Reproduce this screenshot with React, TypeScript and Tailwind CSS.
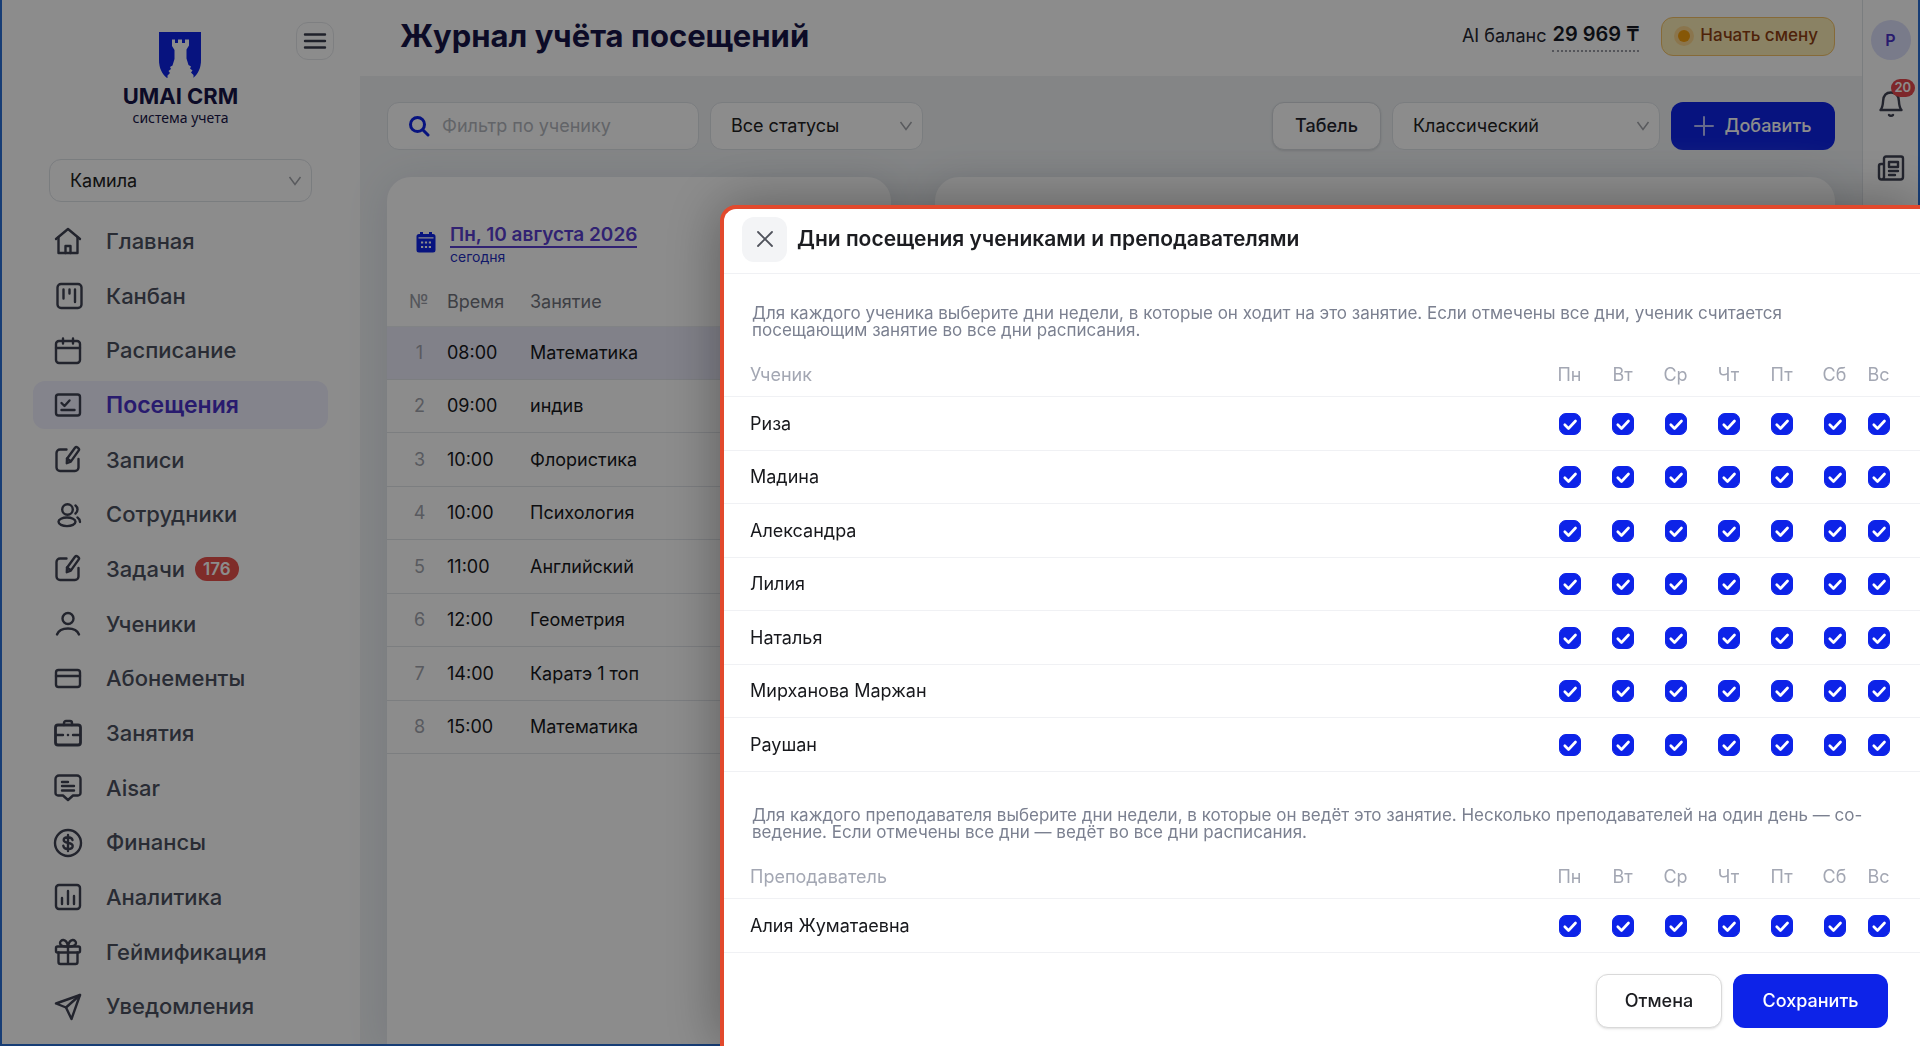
import type { ReactNode } from "react"

const days = ["Пн", "Вт", "Ср", "Чт", "Пт", "Сб", "Вс"]

const students = ["Риза", "Мадина", "Александра", "Лилия", "Наталья", "Мирханова Маржан", "Раушан"]

const teachers = ["Алия Жуматаевна"]

const lessons = [
  { time: "08:00", name: "Математика" },
  { time: "09:00", name: "индив" },
  { time: "10:00", name: "Флористика" },
  { time: "10:00", name: "Психология" },
  { time: "11:00", name: "Английский" },
  { time: "12:00", name: "Геометрия" },
  { time: "14:00", name: "Каратэ 1 топ" },
  { time: "15:00", name: "Математика" },
]

function Icon({ children, className = "size-8" }: { children: ReactNode; className?: string }) {
  return (
    <svg
      viewBox="0 0 32 32"
      fill="none"
      stroke="currentColor"
      strokeWidth="2.4"
      strokeLinecap="round"
      strokeLinejoin="round"
      className={className}
      aria-hidden="true"
    >
      {children}
    </svg>
  )
}

const editIcon = (
  <>
    <path d="M14.5 5.5H8A3.5 3.5 0 0 0 4.5 9v14.5A3.5 3.5 0 0 0 8 27h15a3.5 3.5 0 0 0 3.5-3.5V15" />
    <path d="M23 3.8a1.8 1.8 0 0 1 2.5-.3l.8.6a1.8 1.8 0 0 1 .3 2.5l-7.8 11-4 1.6.2-4.4z" />
    <path d="m15 14.5 3.5 2.5" />
  </>
)

const menu: { label: string; icon: ReactNode; badge?: string; active?: boolean }[] = [
  {
    label: "Главная",
    icon: (
      <>
        <path d="M4 14 16 4l12 10" />
        <path d="M6.5 12.5V28h19V12.5" />
        <path d="M13.5 28v-7h5v7" />
      </>
    ),
  },
  {
    label: "Канбан",
    icon: (
      <>
        <rect x="5.5" y="4" width="24" height="24" rx="3.5" />
        <path d="M11.5 9.5v9M17.5 9.5v4M23 9.5v12.5" />
      </>
    ),
  },
  {
    label: "Расписание",
    icon: (
      <>
        <rect x="4" y="6" width="24" height="22" rx="3" />
        <path d="M4 13h24M11 3.5v5M21 3.5v5" />
      </>
    ),
  },
  {
    label: "Посещения",
    active: true,
    icon: (
      <>
        <rect x="4" y="5.5" width="24" height="21" rx="2.5" />
        <path d="m9.5 14 3 3 5-5.5M9.5 21h13" />
      </>
    ),
  },
  { label: "Записи", icon: editIcon },
  {
    label: "Сотрудники",
    icon: (
      <>
        <circle cx="15.5" cy="10.5" r="5.3" />
        <ellipse cx="15" cy="22.8" rx="8.5" ry="4.3" />
        <path d="M23.5 6.5a5 5 0 0 1 0 8M25.5 18.5c1.600 1 2.400 2.600 2.500 4.500" />
      </>
    ),
  },
  { label: "Задачи", icon: editIcon, badge: "176" },
  {
    label: "Ученики",
    icon: (
      <>
        <circle cx="16" cy="10.5" r="5.5" />
        <path d="M5 26.5c3-8 19-8 22 0" />
      </>
    ),
  },
  {
    label: "Абонементы",
    icon: (
      <>
        <rect x="4" y="7" width="24" height="17" rx="2.5" />
        <path d="M4 13h24" />
      </>
    ),
  },
  {
    label: "Занятия",
    icon: (
      <>
        <rect x="3.5" y="8" width="25" height="20" rx="2.5" strokeWidth="2.8" />
        <path d="M12 8V6a2 2 0 0 1 2-2h4a2 2 0 0 1 2 2v2M4 18h7M21 18h7M15.9 18h.2" />
      </>
    ),
  },
  {
    label: "Aisar",
    icon: (
      <>
        <path d="M7 3.5h18a3.5 3.5 0 0 1 3.5 3.5v14a2.5 2.5 0 0 1-2.5 2.5h-5L16 28l-5-4.5H6A2.5 2.5 0 0 1 3.5 21V7A3.5 3.5 0 0 1 7 3.5z" />
        <path d="M10 10h6M10 14h12M10 18.5h12" />
      </>
    ),
  },
  {
    label: "Финансы",
    icon: (
      <>
        <circle cx="16" cy="16" r="13" />
        <path d="M20.5 13c-.5-2-2.3-2.8-4.5-2.8-2.5 0-4.3 1-4.3 2.9 0 4.3 9 1.5 9 5.9 0 2-2 3-4.7 3-2.5 0-4.3-1-4.7-3.2M16 8v16" />
      </>
    ),
  },
  {
    label: "Аналитика",
    icon: (
      <>
        <rect x="4" y="4" width="24" height="24" rx="3" />
        <path d="M10 17v6M16 10v13M22 15v8" />
      </>
    ),
  },
  {
    label: "Геймификация",
    icon: (
      <>
        <rect x="4" y="10.5" width="24" height="6" rx="1.5" />
        <path d="M6.5 16.5V26a2 2 0 0 0 2 2h15a2 2 0 0 0 2-2v-9.5M16 10.5V28" />
        <path d="M16 10.5c-3 0-8 0-8-3.5s6.5-5.5 8 3.5c1.5-9 8-7 8-3.5s-5 3.5-8 3.5z" />
      </>
    ),
  },
  {
    label: "Уведомления",
    icon: (
      <>
        <path d="M28 4 4 12.5l10 4L19.5 28z" />
        <path d="M28 4 14 16.5" />
      </>
    ),
  },
]

function Logo() {
  return (
    <div className="flex flex-col items-center">
      <svg viewBox="0 0 42 46" className="h-[46px] w-[42px]" aria-hidden="true">
        <path d="M0 0h42v28c0 8-3 14-8 18H8C3 42 0 36 0 28z" fill="#0d23e8" />
        <path
          d="M13 7.5h3V11h3V7.5h4V11h3V7.5h4v6l-2.5 4v9l2 6.5 2.5 1.5-1 2 2.5 2-1.500 2 2.500 2.500V46H8.500v-2.500l2.500-2.500-1.500-2 2.500-2-1-2 2.500-1.500 2-6.500v-9l-2.500-4z"
          fill="#fff"
        />
      </svg>
      <span className="mt-1 text-[22px] leading-7 font-bold text-[#171547]">UMAI CRM</span>
      <span className="text-sm leading-4 text-[#171547] font-['Noto_Sans',sans-serif]">система учета</span>
    </div>
  )
}

function Chevron() {
  return (
    <svg
      viewBox="0 0 14 10"
      fill="none"
      stroke="#a3a5ab"
      strokeWidth="1.5"
      className="pointer-events-none absolute right-2.5 top-1/2 h-2.5 w-3.5 -translate-y-1/2"
      aria-hidden="true"
    >
      <path d="m1.5 1 5.5 7.5L12.5 1" />
    </svg>
  )
}

function Select({ label, value, className }: { label: string; value: string; className: string }) {
  return (
    <div className={`relative ${className}`}>
      <select
        aria-label={label}
        className="h-full w-full appearance-none rounded-xl border border-[#dfe3e8] bg-white px-5 text-lg text-[#212121]"
      >
        <option>{value}</option>
      </select>
      <Chevron />
    </div>
  )
}

function Sidebar() {
  return (
    <aside className="flex w-[358px] shrink-0 flex-col bg-white pt-[22px] pb-2.5 pr-[26px] pl-[31px]">
      <div className="relative flex h-[134px] justify-center pr-1.5 pt-2.5">
        <Logo />
        <button
          type="button"
          aria-label="Свернуть меню"
          className="absolute right-0 top-0 flex size-[38px] items-center justify-center rounded-xl border border-[#e6e8ec] text-[#3a3d4d]"
        >
          <svg viewBox="0 0 24 18" stroke="currentColor" strokeWidth="2.4" strokeLinecap="round" className="h-[18px] w-6">
            <path d="M2 2.5h20M2 9h20M2 15.5h20" />
          </svg>
        </button>
      </div>
      <Select label="Филиал" value="Камила" className="mt-[3px] ml-4 mr-[22px] h-[43px]" />
      <nav className="mt-3 mr-1.5 flex flex-1 flex-col">
        {menu.map((item) => (
          <div key={item.label} className="flex flex-1 items-center">
            <a
              href="#"
              className={
                item.active
                  ? "flex h-12 flex-1 items-center gap-[22px] rounded-xl bg-[#f0f0ff] pl-[19px] text-[23px] font-semibold text-[#4a32c9]"
                  : "flex h-12 flex-1 items-center gap-[22px] rounded-xl pl-[19px] text-[22px] font-medium text-[#4b5060]"
              }
            >
              <Icon className="size-8 text-[#3f4253]">{item.icon}</Icon>
              {item.label}
              {item.badge && (
                <span className="-ml-3 flex h-6 items-center rounded-full bg-[#e8504c] px-2 text-[17px] font-semibold text-white">
                  {item.badge}
                </span>
              )}
            </a>
          </div>
        ))}
      </nav>
    </aside>
  )
}

function Header() {
  return (
    <header className="flex h-19 items-center bg-white pr-[27px] pb-1 pl-10">
      <h1 className="flex-1 text-[31px] font-bold text-[#171547]">Журнал учёта посещений</h1>
      <span className="mr-1.5 text-lg text-[#23252f]">AI баланс</span>
      <span className="mr-[22px] border-b-2 border-dotted border-[#9a9ca5] pb-0.5 text-xl leading-7 font-semibold text-[#171a26]">
        29 969 ₸
      </span>
      <button
        type="button"
        className="flex h-[39px] items-center gap-1.5 rounded-xl border border-[#f4c267] bg-[#fbedb6] px-3 text-[17px] font-medium text-[#8f3f12]"
      >
        <span className="flex size-5 items-center justify-center rounded-full bg-[#fbd68c]">
          <span className="size-3 rounded-full bg-[#f59e0b]" />
        </span>
        <span className="pr-1">Начать смену</span>
      </button>
    </header>
  )
}

function Toolbar() {
  return (
    <div className="flex gap-[11px] pt-[26px] pr-[27px] pl-[27px]">
      <label className="flex h-12 w-[312px] items-center gap-3 rounded-xl border border-[#dfe3e8] bg-white px-5">
        <svg viewBox="0 0 22 22" fill="none" stroke="#0d23e8" strokeWidth="3" strokeLinecap="round" className="size-[22px] shrink-0">
          <circle cx="9.5" cy="9.5" r="7" />
          <path d="m15 15 5 5" />
        </svg>
        <input
          type="text"
          aria-label="Фильтр по ученику"
          placeholder="Фильтр по ученику"
          className="w-full min-w-0 text-lg outline-none placeholder:text-[#b3b6bd]"
        />
      </label>
      <Select label="Статус" value="Все статусы" className="h-12 w-[213px]" />
      <div className="flex-1" />
      <button
        type="button"
        className="h-12 w-[109px] rounded-xl border border-[#d5d9de] bg-white text-lg font-medium text-[#23252f] shadow-sm"
      >
        Табель
      </button>
      <Select label="Вид" value="Классический" className="h-12 w-[268px]" />
      <button
        type="button"
        className="flex h-12 w-[164px] items-center justify-center gap-2.5 rounded-xl bg-[#0d23e8] text-lg font-medium text-white"
      >
        <svg viewBox="0 0 20 20" stroke="#b9c0ff" strokeWidth="2" strokeLinecap="round" className="size-5">
          <path d="M10 1v18M1 10h18" />
        </svg>
        Добавить
      </button>
    </div>
  )
}

function LessonsCard() {
  return (
    <section className="w-[504px] overflow-hidden rounded-t-3xl bg-white shadow-[0_4px_40px_#d9dde4]">
      <div className="flex items-center gap-3.5 pt-[47px] pl-[29px]">
        <svg viewBox="0 0 20 22" className="mb-1.5 h-[22px] w-5" aria-hidden="true">
          <path
            d="M3 3h1V1h3v2h6V1h3v2h1a2.5 2.5 0 0 1 2.5 2.5V19a2.5 2.5 0 0 1-2.5 2.5H3A2.5 2.5 0 0 1 .5 19V5.5A2.5 2.5 0 0 1 3 3z"
            fill="#0d23e8"
          />
          <path d="M2.5 6.8h15" stroke="#fff" strokeWidth="1.2" />
          <path d="M5 11.5h10M5 16h10" stroke="#fff" strokeWidth="2.2" strokeDasharray="2.2 1.7" />
        </svg>
        <div className="flex flex-col items-start">
          <a href="#" className="border-b-2 border-[#5a3fd0] text-[19px] leading-[22px] font-semibold text-[#5a3fd0]">
            Пн, 10 августа 2026
          </a>
          <span className="text-sm leading-[17px] text-[#1f2fc0]">сегодня</span>
        </div>
      </div>
      <table className="mt-3 w-full border-separate border-spacing-0 text-left text-lg text-[#17181c]">
        <thead>
          <tr className="h-[50px] text-[#71747d]">
            <th className="w-15 border-b border-[#eceef2] pl-[22px] font-normal text-[#9a9da7]">№</th>
            <th className="w-[83px] border-b border-[#eceef2] font-normal">Время</th>
            <th className="border-b border-[#eceef2] font-normal">Занятие</th>
          </tr>
        </thead>
        <tbody>
          {lessons.map((lesson, i) => (
            <tr key={i} className={i === 0 ? "h-[53px] bg-[#ebebfa]" : "odd:h-[54px] even:h-[53px]"}>
              <td className="border-b border-[#e2e5ea] pl-[5px] text-center text-[#a2a5ae]">{i + 1}</td>
              <td className="border-b border-[#e2e5ea]">{lesson.time}</td>
              <td className="border-b border-[#e2e5ea]">{lesson.name}</td>
            </tr>
          ))}
        </tbody>
      </table>
    </section>
  )
}

function RightRail() {
  return (
    <aside className="flex w-14 shrink-0 flex-col items-center border-l border-[#dfe3e8] bg-white pt-5 text-[#3f4253]">
      <span className="flex size-10 items-center justify-center rounded-full bg-[#dde0fb] text-base font-semibold text-[#4a32c9]">
        Р
      </span>
      <button type="button" aria-label="Уведомления" className="relative mt-[27px]">
        <Icon className="size-8">
          <path d="M5.5 23h21c-1.8-2-2.3-4-2.6-9-.3-5.5-3.2-8.5-7.9-8.5S8.4 8.5 8.1 14c-.3 5-.8 7-2.6 9zM14 28c.8 1 3.2 1 4 0" />
        </Icon>
        <span className="absolute -top-2 left-4 flex h-[18px] items-center rounded-full bg-[#e5484d] px-1 text-[13px] font-semibold text-white">
          20
        </span>
      </button>
      <button type="button" aria-label="Новости" className="mt-[33px]">
        <Icon className="size-8">
          <path d="M9 25V6.5a2 2 0 0 1 2-2h15a2 2 0 0 1 2 2V25a2.5 2.5 0 0 1-2.5 2.5h-19A2.5 2.5 0 0 1 4 25V14a2 2 0 0 1 2-2h3M9 25a2.5 2.5 0 0 1-2.5 2.5" />
          <path d="M14 10h9v5h-9zM14 19h9M14 23h6" />
        </Icon>
      </button>
    </aside>
  )
}

function Checkbox({ label }: { label: string }) {
  return (
    <span className="relative mx-auto flex size-[22px]">
      <input
        type="checkbox"
        defaultChecked
        aria-label={label}
        className="peer size-[22px] appearance-none rounded-[7px] border border-[#c5c9d3] checked:border-[#0d23e8] checked:bg-[#0d23e8]"
      />
      <svg
        viewBox="0 0 22 22"
        fill="none"
        stroke="#fff"
        strokeWidth="2.7"
        strokeLinecap="round"
        strokeLinejoin="round"
        className="pointer-events-none absolute inset-0 hidden peer-checked:block"
        aria-hidden="true"
      >
        <path d="m5.8 11.8 3.7 3.7L16.5 8" />
      </svg>
    </span>
  )
}

function DaysTable({ title, people }: { title: string; people: string[] }) {
  return (
    <table className="w-full border-separate border-spacing-0 text-lg text-[#17181c]">
      <thead>
        <tr className="h-11 text-[#a3a7b3]">
          <th className="border-b border-[#f0f1f4] pl-[26px] text-left font-normal">{title}</th>
          {days.map((day) => (
            <th key={day} className="w-[53px] border-b border-[#f0f1f4] font-normal last:w-[59px] last:pr-6">
              {day}
            </th>
          ))}
        </tr>
      </thead>
      <tbody>
        {people.map((person) => (
          <tr key={person} className="odd:h-[54px] even:h-[53px]">
            <th scope="row" className="border-b border-[#f0f1f4] pl-[26px] text-left font-normal">
              {person}
            </th>
            {days.map((day) => (
              <td key={day} className="border-b border-[#f0f1f4] last:pr-6">
                <Checkbox label={`${person}, ${day}`} />
              </td>
            ))}
          </tr>
        ))}
      </tbody>
    </table>
  )
}

function VisitDaysDialog() {
  return (
    <div
      role="dialog"
      aria-labelledby="visit-days-title"
      className="flex w-5/8 flex-col overflow-hidden rounded-tl-2xl border-t-4 border-l-4 border-[#e2492d] bg-white shadow-[0_0_56px_rgba(0,0,0,0.35)]"
    >
      <div className="flex h-[65px] items-center gap-2.5 border-b border-[#f0f1f4] pb-1 pl-[18px]">
        <button
          type="button"
          aria-label="Закрыть"
          className="flex size-[45px] items-center justify-center rounded-xl bg-[#f3f4f6]"
        >
          <svg viewBox="0 0 16 16" stroke="#50535c" strokeWidth="1.8" strokeLinecap="round" className="size-4">
            <path d="m1 1 14 14M15 1 1 15" />
          </svg>
        </button>
        <h2 id="visit-days-title" className="text-[21px] font-semibold text-[#1c1d21]">
          Дни посещения учениками и преподавателями
        </h2>
      </div>
      <div className="flex-1">
        <p className="pt-[31px] pr-12 pb-3.5 pl-7 text-[17px] leading-[17px] text-[#7b8090]">
          Для каждого ученика выберите дни недели, в которые он ходит на это занятие. Если отмечены все дни, ученик считается
          посещающим занятие во все дни расписания.
        </p>
        <DaysTable title="Ученик" people={students} />
        <p className="pt-[35px] pr-12 pb-3.5 pl-7 text-[17px] leading-[17px] text-[#7b8090]">
          Для каждого преподавателя выберите дни недели, в которые он ведёт это занятие. Несколько преподавателей на один день — со-
          <br />
          ведение. Если отмечены все дни — ведёт во все дни расписания.
        </p>
        <DaysTable title="Преподаватель" people={teachers} />
      </div>
      <div className="flex justify-end gap-[11px] pr-8 pb-[18px]">
        <button
          type="button"
          className="h-[54px] w-[126px] rounded-xl border border-[#d9d9d9] bg-white text-lg font-medium text-[#1c1d21] shadow-sm"
        >
          Отмена
        </button>
        <button type="button" className="h-[54px] w-[155px] rounded-xl bg-[#0d23e8] text-lg font-medium text-white">
          Сохранить
        </button>
      </div>
    </div>
  )
}

export default function App() {
  return (
    <div className="font-[Inter,sans-serif]">
      <div className="flex h-screen overflow-hidden border-x-2 border-b-2 border-[#2a6fd6] bg-white">
        <Sidebar />
        <main className="flex min-w-0 flex-1 flex-col bg-[#f0f3f5]">
          <Header />
          <Toolbar />
          <div className="mt-[27px] flex flex-1 gap-11 pr-[27px] pl-[27px]">
            <LessonsCard />
            <section className="flex-1 rounded-t-3xl bg-white shadow-[0_4px_40px_#d9dde4]" />
          </div>
        </main>
        <RightRail />
      </div>
      <div className="fixed inset-0 flex justify-end bg-black/45 pt-[205px]">
        <VisitDaysDialog />
      </div>
    </div>
  )
}
